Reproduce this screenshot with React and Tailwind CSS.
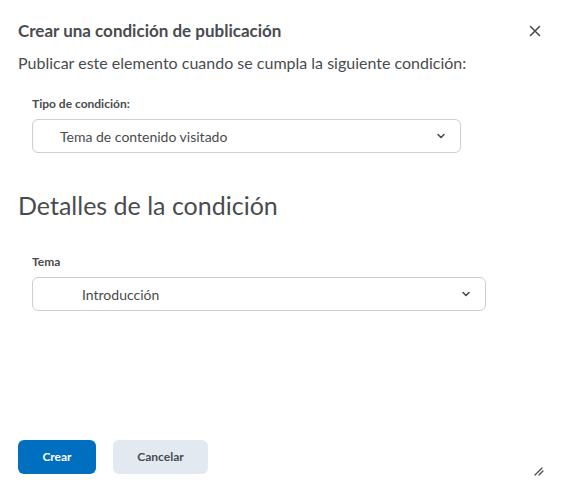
import React from 'react'

const Chevron = () => (
  <svg width="12" height="12" viewBox="0 0 12 12" className="text-[#494c4e]">
    <path d="M3 4.5 L6 7.5 L9 4.5" fill="none" stroke="currentColor" strokeWidth="1.6" strokeLinecap="round" strokeLinejoin="round" />
  </svg>
)

const Select = ({ value, width, pad }) => (
  <div
    className={`flex items-center justify-between h-[34px] rounded-[6px] border border-[#c8cfd6] bg-white ${width}`}
  >
    <span className={`text-[14px] text-[#494c4e] ${pad}`}>{value}</span>
    <span className="mr-[13px] flex items-center">
      <Chevron />
    </span>
  </div>
)

export default function App() {
  return (
    <div
      className="relative w-[563px] h-[497px] bg-white text-[#494c4e]"
      style={{ fontFamily: 'Lato, "Open Sans", sans-serif' }}
    >
      <div className="flex flex-col px-[18px] pt-[20px]">
        <div className="flex items-center justify-between h-[22px]">
          <h1 className="text-[17px] font-bold text-[#494c4e]">Crear una condición de publicación</h1>
          <button className="mr-[4px] flex items-center text-[#494c4e]">
            <svg width="12" height="12" viewBox="0 0 12 12">
              <path d="M1.5 1.5 L10.5 10.5 M10.5 1.5 L1.5 10.5" stroke="currentColor" strokeWidth="1.6" strokeLinecap="round" />
            </svg>
          </button>
        </div>
        <p className="mt-[10px] text-[16px] leading-[22px]">
          Publicar este elemento cuando se cumpla la siguiente condición:
        </p>

        <div className="mt-[22px] pl-[14px] flex flex-col">
          <label className="text-[12px] font-bold leading-[16px]">Tipo de condición:</label>
          <div className="mt-[7px]">
            <Select value="Tema de contenido visitado" width="w-[429px]" pad="pl-[27px]" />
          </div>
        </div>

        <h2 className="mt-[36px] text-[25px] leading-[32px] font-normal">Detalles de la condición</h2>

        <div className="mt-[33px] pl-[14px] flex flex-col">
          <label className="text-[12px] font-bold leading-[16px]">Tema</label>
          <div className="mt-[7px]">
            <Select value="Introducción" width="w-[454px]" pad="pl-[49px]" />
          </div>
        </div>
      </div>

      <div className="absolute left-[18px] top-[440px] flex gap-[17px]">
        <button className="w-[78px] h-[34px] rounded-[6px] bg-[#006fbf] text-white text-[12px] font-bold">
          Crear
        </button>
        <button className="w-[95px] h-[34px] rounded-[6px] bg-[#e3e9f1] text-[#494c4e] text-[12px] font-bold">
          Cancelar
        </button>
      </div>

      <svg className="absolute left-[533px] top-[465px]" width="12" height="12" viewBox="0 0 12 12">
        <path d="M2 10 L9 3 M6 10 L10 6" stroke="#494c4e" strokeWidth="1.3" strokeLinecap="round" />
      </svg>
    </div>
  )
}
